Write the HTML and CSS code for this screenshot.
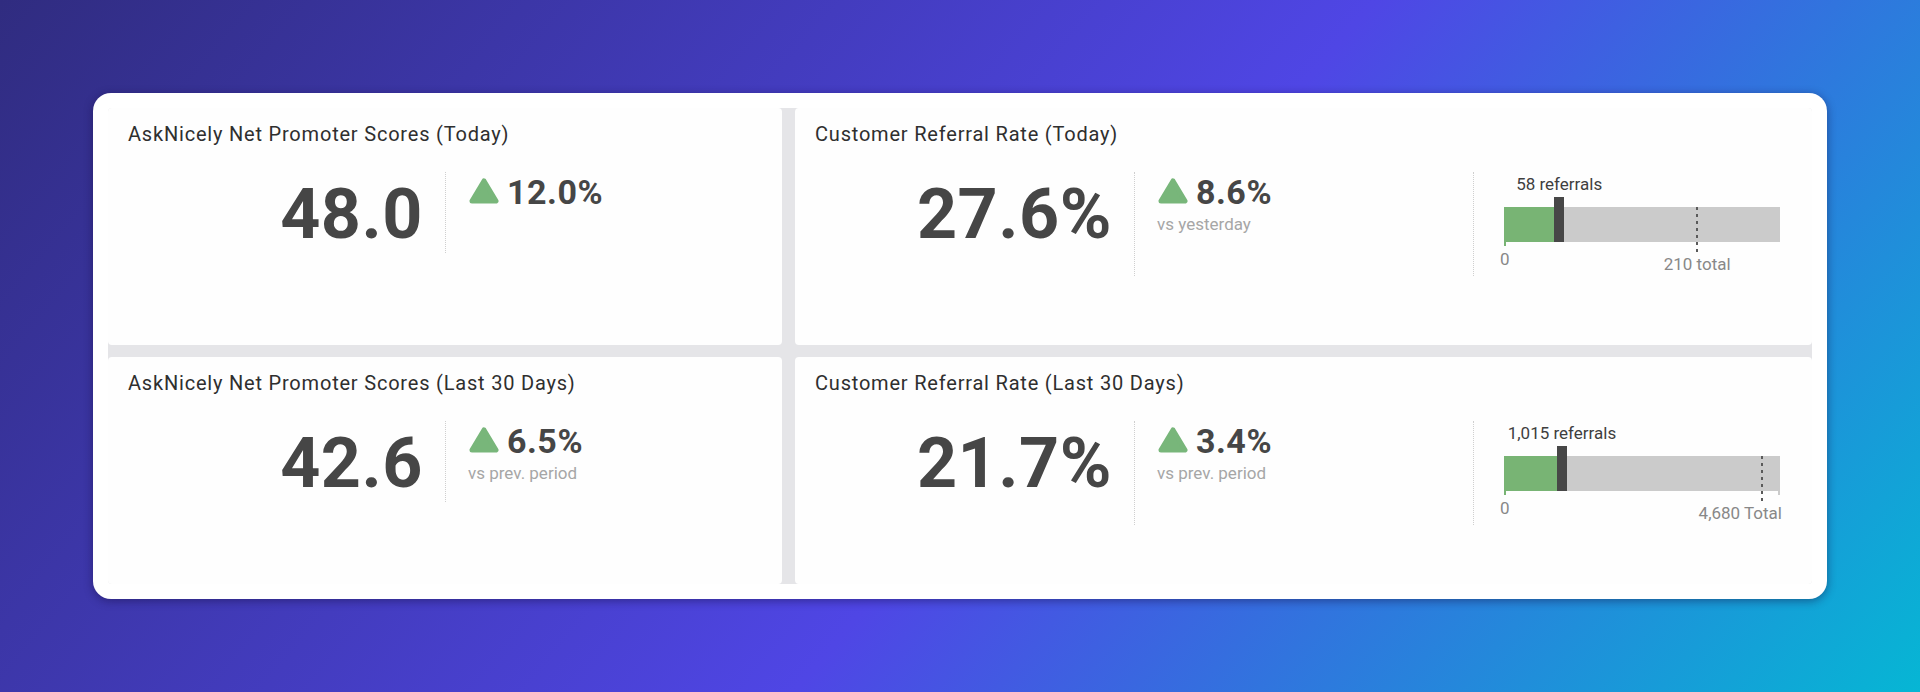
FILE: index.html
```html
<!DOCTYPE html>
<html lang="en">
<head>
<meta charset="utf-8">
<title>Dashboard</title>
<link rel="stylesheet" href="styles.css">
</head>
<body>
<div class="card">
  <div class="grid">
    <section class="tile">
      <h2 class="title">AskNicely Net Promoter Scores (Today)</h2>
      <div class="metrics two">
        <div class="col value-col"><span class="big">48.0</span></div>
        <div class="col change-col">
          <div class="change">
            <svg class="tri" viewBox="0 0 30 26"><polygon points="15,3 27,23 3,23"/></svg>
            <span class="pct">12.0%</span>
          </div>
        </div>
      </div>
    </section>

    <section class="tile">
      <h2 class="title">Customer Referral Rate (Today)</h2>
      <div class="metrics three">
        <div class="col value-col"><span class="big">27.6%</span></div>
        <div class="col change-col">
          <div class="change">
            <svg class="tri" viewBox="0 0 30 26"><polygon points="15,3 27,23 3,23"/></svg>
            <span class="pct">8.6%</span>
          </div>
          <div class="sub">vs yesterday</div>
        </div>
        <div class="col bullet-col">
          <div class="bullet">
            <div class="b-label-row">
              <span class="b-label" style="left:20%">58 referrals</span>
            </div>
            <div class="b-chart">
              <div class="b-bar"><div class="b-fill" style="width:19%"></div></div>
              <div class="b-marker" style="left:20%"></div>
              <div class="b-target" style="left:70%"></div>
            </div>
            <div class="b-axis">
              <span class="tick tick-start"></span>
              <span class="b-min">0</span>
              <span class="b-total center" style="left:70%">210 total</span>
            </div>
          </div>
        </div>
      </div>
    </section>

    <section class="tile">
      <h2 class="title">AskNicely Net Promoter Scores (Last 30 Days)</h2>
      <div class="metrics two">
        <div class="col value-col"><span class="big">42.6</span></div>
        <div class="col change-col">
          <div class="change">
            <svg class="tri" viewBox="0 0 30 26"><polygon points="15,3 27,23 3,23"/></svg>
            <span class="pct">6.5%</span>
          </div>
          <div class="sub">vs prev. period</div>
        </div>
      </div>
    </section>

    <section class="tile">
      <h2 class="title">Customer Referral Rate (Last 30 Days)</h2>
      <div class="metrics three">
        <div class="col value-col"><span class="big">21.7%</span></div>
        <div class="col change-col">
          <div class="change">
            <svg class="tri" viewBox="0 0 30 26"><polygon points="15,3 27,23 3,23"/></svg>
            <span class="pct">3.4%</span>
          </div>
          <div class="sub">vs prev. period</div>
        </div>
        <div class="col bullet-col">
          <div class="bullet">
            <div class="b-label-row">
              <span class="b-label" style="left:21%">1,015 referrals</span>
            </div>
            <div class="b-chart">
              <div class="b-bar"><div class="b-fill" style="width:19.3%"></div></div>
              <div class="b-marker" style="left:21%"></div>
              <div class="b-target" style="left:93.4%"></div>
            </div>
            <div class="b-axis">
              <span class="tick tick-start"></span>
              <span class="tick tick-end"></span>
              <span class="b-min">0</span>
              <span class="b-total end">4,680 Total</span>
            </div>
          </div>
        </div>
      </div>
    </section>
  </div>
</div>
</body>
</html>
```
FILE: styles.css
```css
* { box-sizing: border-box; margin: 0; padding: 0; }

html, body { width: 1920px; height: 692px; overflow: hidden; }

body {
  padding: 93px;
  background: linear-gradient(130deg, #302c80 0%, #4f46e5 55%, #06b6d4 100%);
  font-family: Roboto, "Liberation Sans", sans-serif;
}

.card {
  height: 506px;
  background: #ffffff;
  border-radius: 18px;
  padding: 15px;
  box-shadow: 0 2px 10px rgba(20, 12, 60, 0.45);
}

.grid {
  height: 100%;
  display: grid;
  grid-template-columns: 674px 1fr;
  grid-template-rows: 237px 1fr;
  gap: 12px 13px;
  background: #e5e5e8;
  border-radius: 4px;
}

.tile {
  background: #fefefe;
  border-radius: 4px;
  padding-top: 14px;
}

.title {
  font-size: 20px;
  line-height: 24px;
  font-weight: 400;
  color: #2f2f2f;
  padding-left: 20px;
  letter-spacing: 0.8px;
}

.metrics {
  display: grid;
  margin-top: 26px;
}
.metrics.two { grid-template-columns: 1fr 1fr; }
.metrics.three { grid-template-columns: 1fr 1fr 1fr; }

.col + .col { border-left: 1px dotted #cfcfcf; }

.value-col {
  display: flex;
  justify-content: flex-end;
  align-items: flex-start;
  padding: 7px 22px 4px 0;
}

.big {
  font-size: 70px;
  line-height: 70px;
  font-weight: 700;
  color: #464646;
  letter-spacing: 0.5px;
}

.change-col { padding: 3px 0 0 23px; }

.change {
  display: flex;
  align-items: baseline;
  gap: 8px;
}

.tri { width: 30px; height: 26px; }
.tri polygon {
  fill: #78b67a;
  stroke: #78b67a;
  stroke-width: 5;
  stroke-linejoin: round;
}

.pct {
  font-size: 34px;
  line-height: 34px;
  font-weight: 700;
  color: #464646;
  letter-spacing: 0.5px;
}

.sub {
  font-size: 17px;
  line-height: 19px;
  color: #a6a6a6;
  margin-top: 6px;
  margin-left: -1px;
}

.bullet-col { padding: 2px 0 3px 30px; }

.bullet { width: 276px; }

.b-label-row { position: relative; height: 20px; }

.b-label {
  position: absolute;
  top: 0;
  transform: translateX(-50%);
  font-size: 17px;
  line-height: 20px;
  color: #3f3f3f;
  white-space: nowrap;
}

.b-chart {
  position: relative;
  height: 45px;
  margin-top: 3px;
  padding-top: 10px;
}

.b-bar {
  height: 35px;
  background: #cbcbcb;
}

.b-fill {
  height: 100%;
  background: #78b474;
}

.b-marker {
  position: absolute;
  top: 0;
  width: 10px;
  height: 45px;
  background: #474747;
  transform: translateX(-50%);
}

.b-target {
  position: absolute;
  top: 10px;
  width: 2px;
  height: 46px;
  margin-left: -1px;
  background: repeating-linear-gradient(to bottom, #5a5a5a 0 3px, transparent 3px 7px);
}

.b-axis { position: relative; height: 31px; }

.tick {
  position: absolute;
  top: 0;
  width: 2px;
  height: 4px;
}
.tick-start { left: 0; background: #78b474; }
.tick-end { right: 0; background: #cbcbcb; }

.b-min {
  position: absolute;
  left: -4px;
  top: 7px;
  font-size: 17px;
  line-height: 20px;
  color: #888888;
}

.b-total {
  position: absolute;
  top: 12px;
  font-size: 17px;
  line-height: 20px;
  color: #888888;
  white-space: nowrap;
}
.b-total.center { transform: translateX(-50%); }
.b-total.end { right: -2px; }
```
